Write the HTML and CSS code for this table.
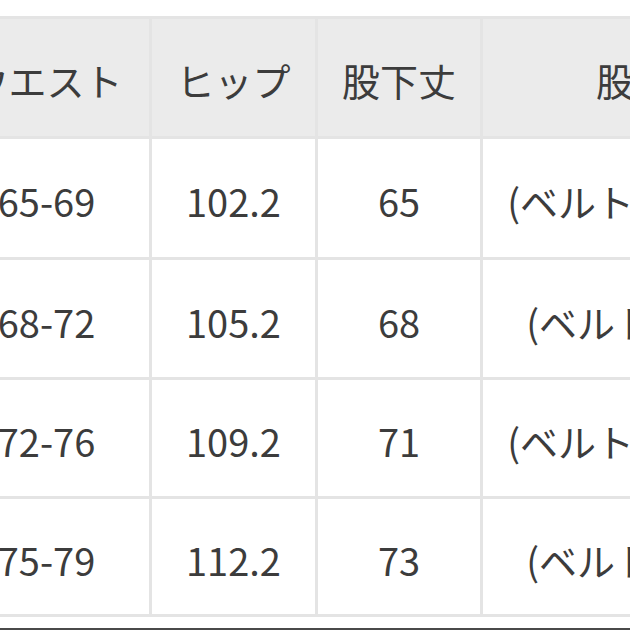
FILE: index.html
```html
<!DOCTYPE html>
<html lang="ja">
<head>
<meta charset="utf-8">
<link rel="stylesheet" href="styles.css">
</head>
<body>
<div class="page">
  <div class="size-table">
    <div class="cell head">ウエスト</div>
    <div class="cell head">ヒップ</div>
    <div class="cell head">股下丈</div>
    <div class="cell head">股上</div>

    <div class="cell">65-69</div>
    <div class="cell">102.2</div>
    <div class="cell">65</div>
    <div class="cell">(ベルト含まず)</div>

    <div class="cell">68-72</div>
    <div class="cell">105.2</div>
    <div class="cell">68</div>
    <div class="cell">(ベルト含む)</div>

    <div class="cell">72-76</div>
    <div class="cell">109.2</div>
    <div class="cell">71</div>
    <div class="cell">(ベルト含まず)</div>

    <div class="cell">75-79</div>
    <div class="cell">112.2</div>
    <div class="cell">73</div>
    <div class="cell">(ベルト含む)</div>
  </div>
  <div class="bottom-bar"></div>
</div>
</body>
</html>
```

FILE: styles.css
```css
html, body {
  margin: 0;
  padding: 0;
  background: #ffffff;
}

.page {
  width: 630px;
  height: 630px;
  overflow: hidden;
  padding-top: 16px;
  box-sizing: border-box;
}

.size-table {
  display: grid;
  grid-template-columns: 205px 163px 162px 302px;
  grid-template-rows: 117px 118px 117px 116px 115px;
  gap: 3px;
  padding: 3px;
  background: #e4e4e4;
  margin-left: -59px;
  width: max-content;
}

.cell {
  background: #ffffff;
  display: flex;
  align-items: center;
  justify-content: center;
  white-space: nowrap;
  font-family: "Noto Sans CJK JP", "Noto Sans", sans-serif;
  font-size: 38px;
  font-weight: 400;
  color: #3c3c3c;
  padding-top: 5px;
  box-sizing: border-box;
}

.cell.head {
  background: #ebebeb;
  padding-top: 3px;
}

.bottom-bar {
  margin-top: 11px;
  height: 4px;
  background: #4a4a4a;
}
```
